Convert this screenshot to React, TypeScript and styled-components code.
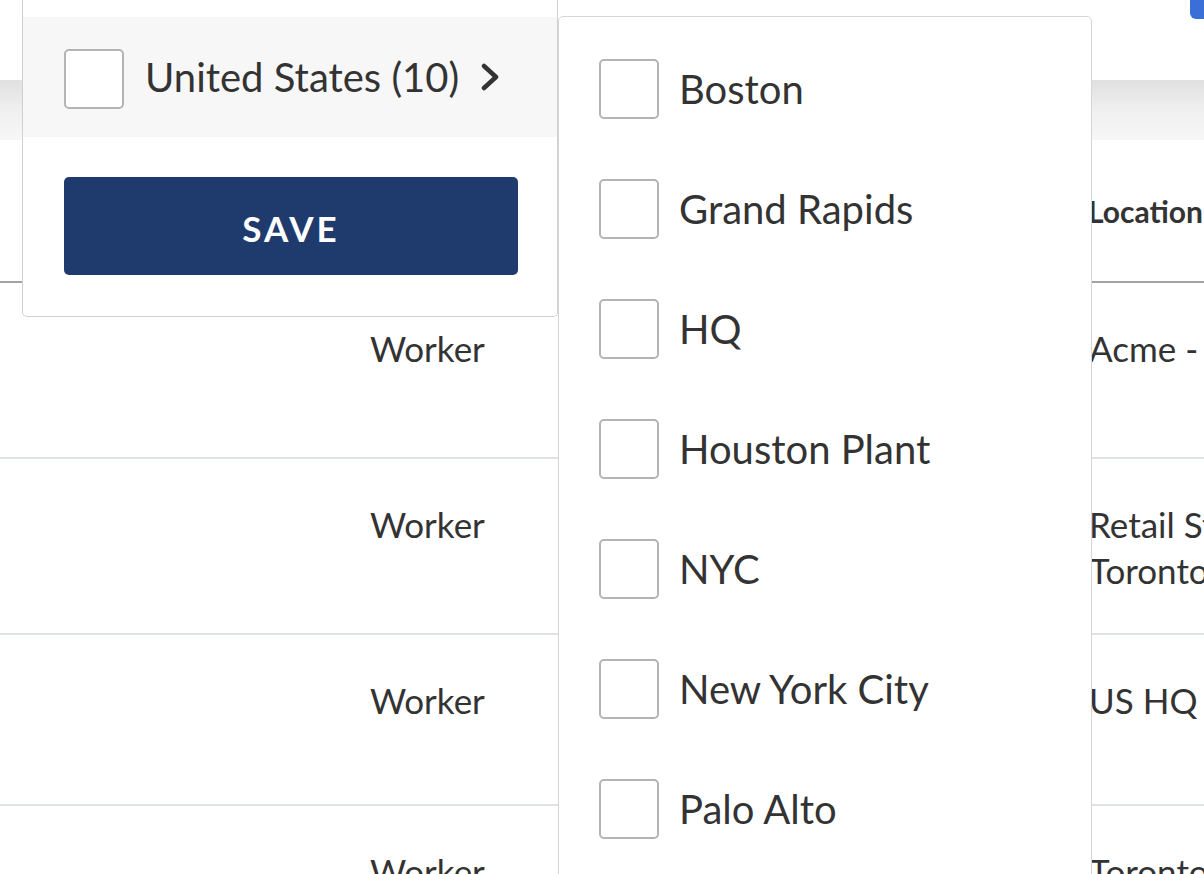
import React from 'react';
import styled, { createGlobalStyle } from 'styled-components';

const GlobalStyle = createGlobalStyle`
  html, body {
    margin: 0;
    padding: 0;
    background: #ffffff;
  }
  body {
    font-family: 'Lato', 'Noto Sans', sans-serif;
    color: #333333;
  }
`;

interface Row {
  id: number;
  role: string;
  location: string[];
  height: number;
}

const rows: Row[] = [
  { id: 1, role: 'Worker', location: ['Acme - Main Office'], height: 176 },
  { id: 2, role: 'Worker', location: ['Retail Store', 'Toronto'], height: 176 },
  { id: 3, role: 'Worker', location: ['US HQ'], height: 171 },
  { id: 4, role: 'Worker', location: ['Toronto'], height: 176 },
];

const cities = ['Boston', 'Grand Rapids', 'HQ', 'Houston Plant', 'NYC', 'New York City', 'Palo Alto'];

const Page = styled.div`
  position: relative;
  width: 1204px;
  height: 874px;
  overflow: hidden;
  background: #ffffff;
`;

const TopBar = styled.div`
  height: 80px;
  display: flex;
  justify-content: flex-end;
  align-items: flex-start;
`;

const BlueTab = styled.div`
  width: 14px;
  height: 19px;
  background: #3a6fd8;
  border-bottom-left-radius: 6px;
`;

const ToolbarShadow = styled.div`
  height: 60px;
  background: linear-gradient(to bottom, #e0e0e0 0%, #eeeeee 45%, #f7f7f7 100%);
`;

const Table = styled.div`
  display: flex;
  flex-direction: column;
`;

const TableRow = styled.div<{ $header?: boolean }>`
  display: grid;
  grid-template-columns: 370px 719px 1fr;
  box-sizing: border-box;
  border-bottom: ${({ $header }) => ($header ? '2px solid #a3a3a3' : '2px solid #dfe2e5')};
  padding-top: ${({ $header }) => ($header ? '0' : '42px')};
  align-items: ${({ $header }) => ($header ? 'center' : 'start')};
`;

const HeaderCell = styled.div`
  font-size: 30px;
  font-weight: 700;
  color: #333333;
  white-space: nowrap;
  margin-left: -1px;
`;

const Cell = styled.div`
  font-size: 35px;
  line-height: 46px;
  color: #333333;
  white-space: nowrap;
`;

const FilterPanel = styled.div`
  position: absolute;
  left: 22px;
  top: -30px;
  width: 536px;
  box-sizing: border-box;
  background: #ffffff;
  border: 1px solid #d0d0d0;
  border-top: none;
  border-radius: 0 0 5px 5px;
  padding-top: 47px;
`;

const CountryRow = styled.div`
  height: 120px;
  background: #f7f7f7;
  display: flex;
  align-items: center;
  padding-left: 41px;
`;

const Checkbox = styled.span<{ $offset?: number }>`
  width: 60px;
  height: 60px;
  box-sizing: border-box;
  border: 2px solid #b4b4b4;
  border-radius: 5px;
  background: #ffffff;
  flex-shrink: 0;
  margin-top: ${({ $offset }) => $offset ?? 0}px;
`;

const OptionLabel = styled.span<{ $gap?: number }>`
  font-size: 40px;
  color: #333333;
  margin-left: ${({ $gap }) => $gap ?? 22}px;
  white-space: nowrap;
`;

const Chevron = styled.svg`
  margin-left: 22px;
  flex-shrink: 0;
`;

const PanelFooter = styled.div`
  padding: 40px 40px 41px 41px;
`;

const SaveButton = styled.button`
  width: 454px;
  height: 98px;
  border: none;
  border-radius: 5px;
  background: #1f3b6e;
  color: #ffffff;
  font-family: 'Lato', 'Noto Sans', sans-serif;
  font-weight: 700;
  font-size: 35px;
  letter-spacing: 3px;
  padding: 4px 0 0;
  cursor: pointer;
`;

const CityMenu = styled.div`
  position: absolute;
  left: 558px;
  top: 16px;
  width: 534px;
  height: 900px;
  box-sizing: border-box;
  background: #ffffff;
  border: 1px solid #d6d6d6;
  border-radius: 5px;
  padding-top: 12px;
`;

const CityItem = styled.div`
  height: 120px;
  display: flex;
  align-items: center;
  padding-left: 40px;
`;

const App: React.FC = () => {
  return (
    <>
      <GlobalStyle />
      <Page>
        <TopBar>
          <BlueTab />
        </TopBar>
        <ToolbarShadow />
        <Table>
          <TableRow $header style={{ height: 143 }}>
            <div />
            <div />
            <HeaderCell>Location</HeaderCell>
          </TableRow>
          {rows.map(row => (
            <TableRow key={row.id} style={{ height: row.height }}>
              <div />
              <Cell>{row.role}</Cell>
              <Cell>
                {row.location.map(line => (
                  <div key={line}>{line}</div>
                ))}
              </Cell>
            </TableRow>
          ))}
        </Table>

        <FilterPanel>
          <CountryRow>
            <Checkbox $offset={3} />
            <OptionLabel $gap={21}>United States (10)</OptionLabel>
            <Chevron width="20" height="30" viewBox="0 0 20 30">
              <polyline
                points="3,4 15,15 3,26"
                fill="none"
                stroke="#333333"
                strokeWidth="4.5"
                strokeLinecap="round"
                strokeLinejoin="round"
              />
            </Chevron>
          </CountryRow>
          <PanelFooter>
            <SaveButton>SAVE</SaveButton>
          </PanelFooter>
        </FilterPanel>

        <CityMenu>
          {cities.map(city => (
            <CityItem key={city}>
              <Checkbox />
              <OptionLabel $gap={20}>{city}</OptionLabel>
            </CityItem>
          ))}
        </CityMenu>
      </Page>
    </>
  );
};

export default App;
